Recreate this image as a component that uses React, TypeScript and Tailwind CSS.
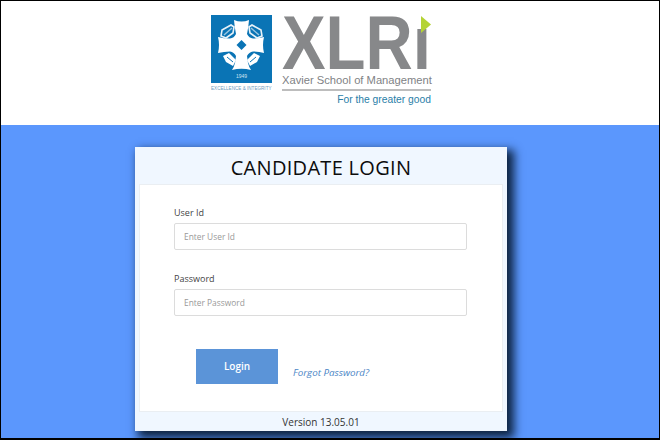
const Crest = () => (
  <svg viewBox="0 0 61 68" className="w-[61px] h-[68px] block">
    <rect width="61" height="68" fill="#0a74b5" />
    <path
      d="M23 5 Q30.500 8 38 5 Q37.500 12 36 19 Q38 23 42 23.500 Q48 23.500 53 22 Q51 30 53 38 Q48 36.500 42 36.500 Q38 37 36 41 L37 48 Q38 52 40 55 Q30.500 52.500 21 55 Q23 52 24 48 L25 41 Q23 37 19 36.500 Q13 36.500 7 38 Q9 30 7 22 Q13 23.500 19 23.500 Q23 23 25 19 Q23.500 12 23 5 Z"
      fill="#ffffff"
    />
    <path d="M30.500 25 L35.500 30 L30.500 35 L25.500 30 Z" fill="#0a74b5" />
    <g fill="#0a74b5" stroke="#e8f2f8" strokeWidth="1.600">
      <path d="M11 15 L20 10 L23 12 L22 18 L15 23 L10 21 Z" />
      <path d="M50 15 L41 10 L38 12 L39 18 L46 23 L51 21 Z" />
    </g>
    <path d="M13 20 L21 13" stroke="#9cc6e0" strokeWidth="1.500" />
    <path d="M48 20 L40 13" stroke="#9cc6e0" strokeWidth="1.500" />
    <g fill="#ffffff">
      <path d="M12 41 L18 38 L25 45 L22 51 L15 47 Z" />
      <path d="M49 41 L43 38 L36 45 L39 51 L46 47 Z" />
    </g>
    <path d="M16 42 L22 47" stroke="#0a74b5" strokeWidth="1" />
    <path d="M45 42 L39 47" stroke="#0a74b5" strokeWidth="1" />
    <text x="30.500" y="63" textAnchor="middle" fontSize="5" fill="#cfe3f0" fontFamily="'Liberation Sans', sans-serif">1949</text>
  </svg>
);

const Logo = () => (
  <div className="flex items-start gap-[10px] font-['Liberation_Sans',sans-serif]">
    <div className="w-[61px]">
      <Crest />
      <div className="mt-[2px] text-[4.6px] leading-[7px] whitespace-nowrap text-[#6f9cbd]">EXCELLENCE &amp; INTEGRITY</div>
    </div>
    <div className="relative w-[149px] -mt-[1px]">
      <div className="h-[58px] text-[76px] leading-[58px] font-bold text-[#87888a] whitespace-nowrap origin-left scale-x-[0.86]">XLRı</div>
      <svg viewBox="0 0 10 17" className="absolute right-[0px] top-[2px] w-[10px] h-[17px]">
        <path d="M0 0 L10 8.500 L0 17 Z" fill="#b4d335" />
      </svg>
      <div className="mt-[1px] text-[11.2px] leading-[14px] text-[#808285] whitespace-nowrap">Xavier School of Management</div>
      <div className="mt-[2px] h-[2px] bg-[#bdbdbd]" />
      <div className="mt-[2px] text-right text-[10.3px] leading-[14px] text-[#2a7ea8] whitespace-nowrap">For the greater good</div>
    </div>
  </div>
);

const Field = ({ label, placeholder }: { label: string; placeholder: string }) => (
  <div>
    <label className="block text-[9px] leading-[12px] text-[#444] mb-[4px]">{label}</label>
    <input
      placeholder={placeholder}
      className="block w-[293px] h-[27px] px-[9px] bg-white border border-[#dcdcdc] rounded-[2px] text-[8.4px] placeholder:text-[#999] outline-none"
    />
  </div>
);

export default function App() {
  return (
    <div className="w-[660px] h-[440px] overflow-hidden flex flex-col bg-black pt-[1px] pl-[1px] pr-[1px] pb-[2px] font-['Open_Sans',sans-serif]">
      <div className="h-[124px] shrink-0 bg-white pt-[14px] pl-[210px]">
        <Logo />
      </div>
      <div className="flex-1 bg-[#5b97fd] pl-[134px] pt-[22px] overflow-hidden">
        <div className="w-[372px] h-[284px] flex flex-col bg-[#f0f7ff] shadow-[5px_5px_9px_2px_#0d2340]">
          <div className="h-[37px] shrink-0 flex items-center justify-center pt-[4px] text-[20px] font-medium text-[#0c0c0c] tracking-[0.3px]">
            CANDIDATE LOGIN
          </div>
          <div className="h-[228px] shrink-0 mx-[4px] bg-white border border-[#eaeef2] pt-[22px] pl-[34px]">
            <div className="flex flex-col gap-[23px]">
              <Field label="User Id" placeholder="Enter User Id" />
              <Field label="Password" placeholder="Enter Password" />
            </div>
            <div className="flex items-end mt-[33px] pl-[22px]">
              <button type="button" className="w-[82px] h-[35px] bg-[#5b94d8] text-white text-[10px] font-semibold">
                Login
              </button>
              <a className="ml-[15px] mb-[4px] text-[9.8px] leading-[14px] italic text-[#4c86c6]">Forgot Password?</a>
            </div>
          </div>
          <div className="flex-1 flex items-center justify-center pt-[2px] text-[10px] text-[#333]">Version 13.05.01</div>
        </div>
      </div>
    </div>
  );
}
